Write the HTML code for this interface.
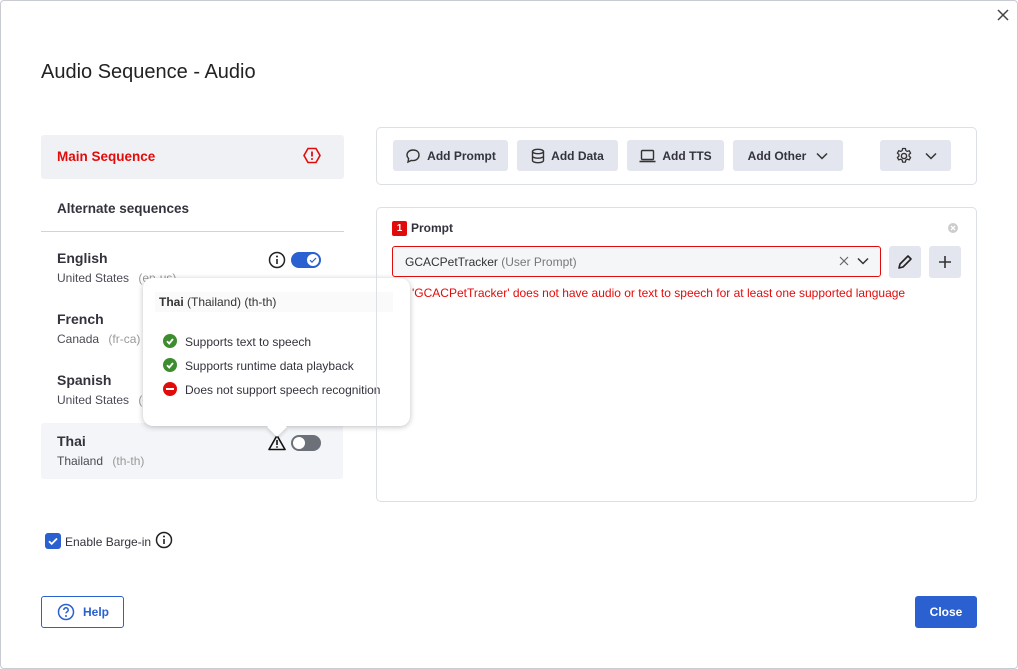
<!DOCTYPE html>
<html><head><meta charset="utf-8"><style>
*{box-sizing:border-box;margin:0;padding:0}
body{width:1018px;height:669px;background:#fff;font-family:"Liberation Sans",sans-serif;color:#33333d;position:relative;overflow:hidden}
.frame{position:absolute;left:0;top:0;width:1018px;height:669px;border:1px solid #c8cbd2;border-radius:4px}
.a{position:absolute}
.b{font-weight:bold}
.btn{position:absolute;top:140px;height:31px;background:#e3e6ee;border-radius:3px;font-size:12px;font-weight:bold;color:#33333d;display:flex;align-items:center;justify-content:center;gap:6px}
.lang{position:absolute;left:57px;font-size:14px;font-weight:bold;color:#33333d}
.sub{position:absolute;left:57px;font-size:12px;color:#4a4a55}
.sub span{color:#999;margin-left:6px}
.tg{position:absolute;width:30px;height:16px;border-radius:8px}
.tg i{position:absolute;top:2px;width:12px;height:12px;border-radius:50%;background:#fff}
</style></head><body>
<div class="frame"></div>
<svg class="a" style="left:997px;top:9px" width="12" height="12"><path d="M1 1l10 10M11 1L1 11" stroke="#444" stroke-width="1.5"/></svg>
<div class="a" style="left:41px;top:61px;font-size:20px;color:#222">Audio Sequence - Audio</div>

<div class="a" style="left:41px;top:135px;width:303px;height:44px;background:#f0f1f5;border-radius:3px"></div>
<div class="a b" style="left:57px;top:149px;font-size:13.5px;color:#e20b0b">Main Sequence</div>
<svg class="a" style="left:303px;top:147px" width="18" height="17" viewBox="0 0 18 17"><path d="M5 1.5H13L17 8.5L13 15.5H5L1 8.5Z" fill="none" stroke="#e20b0b" stroke-width="1.6"/><path d="M9 4.5V9.5" stroke="#e20b0b" stroke-width="1.8"/><circle cx="9" cy="12" r="1" fill="#e20b0b"/></svg>
<div class="a b" style="left:57px;top:201px;font-size:13.5px">Alternate sequences</div>
<div class="a" style="left:41px;top:231px;width:303px;height:1px;background:#d0d3da"></div>

<div class="lang" style="top:250px">English</div>
<div class="sub" style="top:271px">United States <span>(en-us)</span></div>
<svg class="a" style="left:268px;top:251px" width="18" height="18"><circle cx="9" cy="9" r="7.5" fill="none" stroke="#222" stroke-width="1.5"/><rect x="8.2" y="8" width="1.6" height="5" fill="#222"/><circle cx="9" cy="5.5" r="1" fill="#222"/></svg>
<div class="tg" style="left:291px;top:252px;background:#2a60d0"><i style="left:16px"></i></div>
<svg class="a" style="left:307px;top:254px" width="12" height="12"><path d="M3 6.2l2 2L9 4" fill="none" stroke="#2a60d0" stroke-width="1.2"/></svg>
<div class="lang" style="top:311px">French</div>
<div class="sub" style="top:332px">Canada <span>(fr-ca)</span></div>
<div class="lang" style="top:372px">Spanish</div>
<div class="sub" style="top:393px">United States <span>(es-us)</span></div>
<div class="a" style="left:41px;top:423px;width:302px;height:56px;background:#f4f5f8;border-radius:3px"></div>
<div class="lang" style="top:433px">Thai</div>
<div class="sub" style="top:454px">Thailand <span>(th-th)</span></div>
<svg class="a" style="left:268px;top:434px" width="18" height="17"><path d="M9 1.5L17 15.5H1Z" fill="none" stroke="#111" stroke-width="1.6" stroke-linejoin="round"/><rect x="8.2" y="6" width="1.6" height="5" fill="#111"/><circle cx="9" cy="13" r="0.9" fill="#111"/></svg>
<div class="tg" style="left:291px;top:435px;background:#6b7079"><i style="left:2px"></i></div>

<div class="a" style="left:143px;top:278px;width:267px;height:148px;background:#fff;border-radius:10px;box-shadow:0 1px 6px rgba(0,0,0,.25)"></div>
<div class="a" style="left:270px;top:420px;width:14px;height:14px;background:#fff;transform:rotate(45deg);box-shadow:2px 2px 3px rgba(0,0,0,.12)"></div>
<div class="a" style="left:155px;top:292px;width:238px;height:20px;background:#fafafb"></div>
<div class="a" style="left:159px;top:295px;font-size:12px;color:#333"><b>Thai</b> (Thailand) (th-th)</div>
<div class="a" style="left:163px;top:334px;width:14px;height:14px;border-radius:50%;background:#3d8c2f"></div>
<div class="a" style="left:163px;top:358px;width:14px;height:14px;border-radius:50%;background:#3d8c2f"></div>
<svg class="a" style="left:163px;top:334px" width="14" height="38"><path d="M4 7.3L6.2 9.5L10 5" stroke="#fff" stroke-width="1.8" fill="none"/><path d="M4 31.3L6.2 33.5L10 29" stroke="#fff" stroke-width="1.8" fill="none"/></svg>
<div class="a" style="left:163px;top:382px;width:14px;height:14px;border-radius:50%;background:#e20b0b"></div>
<div class="a" style="left:166px;top:388px;width:8px;height:2px;background:#fff"></div>
<div class="a" style="left:185px;top:335px;font-size:12px">Supports text to speech</div>
<div class="a" style="left:185px;top:359px;font-size:12px">Supports runtime data playback</div>
<div class="a" style="left:185px;top:383px;font-size:12px">Does not support speech recognition</div>

<div class="a" style="left:376px;top:127px;width:601px;height:58px;border:1px solid #dcdfe5;border-radius:5px"></div>
<div class="btn" style="left:393px;width:115px"><svg width="16" height="16"><path d="M8 2C4.5 2 2 4.2 2 7c0 1.4.6 2.6 1.6 3.5L3 14l3.4-1.6c.5.1 1 .2 1.6.2 3.5 0 6-2.3 6-5.6S11.5 2 8 2Z" fill="none" stroke="#333" stroke-width="1.4"/></svg>Add Prompt</div>
<div class="btn" style="left:517px;width:101px"><svg width="14" height="16"><ellipse cx="7" cy="3.5" rx="5.5" ry="2.2" fill="none" stroke="#333" stroke-width="1.4"/><path d="M1.5 3.5v9c0 1.2 2.5 2.2 5.5 2.2s5.5-1 5.5-2.2v-9M1.5 8c0 1.2 2.5 2.2 5.5 2.2S12.5 9.2 12.5 8" fill="none" stroke="#333" stroke-width="1.4"/></svg>Add Data</div>
<div class="btn" style="left:627px;width:97px"><svg width="17" height="14"><rect x="2.5" y="1.5" width="12" height="9" rx="1" fill="none" stroke="#333" stroke-width="1.4"/><path d="M0.5 12.5h16" stroke="#333" stroke-width="1.6"/></svg>Add TTS</div>
<div class="btn" style="left:733px;width:110px;gap:10px">Add Other <svg width="12" height="8"><path d="M1 1.5l5 5 5-5" fill="none" stroke="#333" stroke-width="1.5"/></svg></div>
<div class="btn" style="left:880px;width:71px;gap:12px"><svg width="18" height="18" viewBox="0 0 18 18"><circle cx="9" cy="9" r="2.6" fill="none" stroke="#333" stroke-width="1.4"/><path d="M7.6 1.5h2.8l.4 2 1.5.9 1.9-.7 1.4 2.4-1.5 1.3v1.8l1.5 1.3-1.4 2.4-1.9-.7-1.5.9-.4 2H7.6l-.4-2-1.5-.9-1.9.7-1.4-2.4 1.5-1.3V7.4L2.4 6.1l1.4-2.4 1.9.7 1.5-.9Z" fill="none" stroke="#333" stroke-width="1.3" stroke-linejoin="round"/></svg><svg width="12" height="8"><path d="M1 1.5l5 5 5-5" fill="none" stroke="#333" stroke-width="1.5"/></svg></div>

<div class="a" style="left:376px;top:207px;width:601px;height:295px;border:1px solid #dcdfe5;border-radius:5px"></div>
<div class="a b" style="left:392px;top:221px;width:15px;height:15px;background:#e20b0b;color:#fff;font-size:10px;text-align:center;line-height:15px;border-radius:2px">1</div>
<div class="a b" style="left:411px;top:221px;font-size:12px">Prompt</div>
<svg class="a" style="left:947px;top:222px" width="12" height="12"><circle cx="6" cy="6" r="5" fill="#ccc"/><path d="M4 4l4 4M8 4l-4 4" stroke="#fff" stroke-width="1.3"/></svg>
<div class="a" style="left:392px;top:246px;width:489px;height:31px;border:1px solid #e20b0b;border-radius:3px;background:#f5f6f8"></div>
<div class="a" style="left:405px;top:255px;font-size:12px;color:#333">GCACPetTracker <span style="color:#777">(User Prompt)</span></div>
<svg class="a" style="left:839px;top:256px" width="10" height="10"><path d="M1 1l8 8M9 1L1 9" stroke="#666" stroke-width="1.2"/></svg>
<svg class="a" style="left:857px;top:257px" width="12" height="8"><path d="M1 1.5l5 5 5-5" fill="none" stroke="#333" stroke-width="1.5"/></svg>
<div class="a" style="left:889px;top:246px;width:32px;height:32px;background:#e3e6ee;border-radius:3px"></div>
<svg class="a" style="left:897px;top:254px" width="16" height="16"><path d="M2 14l1-4 8-8 3 3-8 8Z" fill="none" stroke="#222" stroke-width="1.6" stroke-linejoin="round"/></svg>
<div class="a" style="left:929px;top:246px;width:32px;height:32px;background:#e3e6ee;border-radius:3px"></div>
<svg class="a" style="left:937px;top:254px" width="16" height="16"><path d="M8 2v12M2 8h12" stroke="#333" stroke-width="1.6"/></svg>
<div class="a" style="left:412px;top:286px;font-size:12px;color:#e20b0b">'GCACPetTracker' does not have audio or text to speech for at least one supported language</div>

<div class="a" style="left:45px;top:533px;width:16px;height:16px;background:#2a60d0;border-radius:3px"></div>
<svg class="a" style="left:45px;top:533px" width="16" height="16"><path d="M4 8.2l2.7 2.7L12 5.5" fill="none" stroke="#fff" stroke-width="1.8"/></svg>
<div class="a" style="left:65px;top:535px;font-size:12px">Enable Barge-in</div>
<svg class="a" style="left:155px;top:531px" width="18" height="18"><circle cx="9" cy="9" r="7.5" fill="none" stroke="#222" stroke-width="1.5"/><rect x="8.2" y="8" width="1.6" height="5" fill="#222"/><circle cx="9" cy="5.5" r="1" fill="#222"/></svg>

<div class="a" style="left:41px;top:596px;width:83px;height:32px;border:1px solid #2a60d0;border-radius:3px"></div>
<svg class="a" style="left:57px;top:603px" width="18" height="18"><circle cx="9" cy="9" r="7.5" fill="none" stroke="#2a60d0" stroke-width="1.5"/><path d="M6.8 7a2.2 2.2 0 1 1 3 2c-.6.3-.8.7-.8 1.4" fill="none" stroke="#2a60d0" stroke-width="1.5"/><circle cx="9" cy="13" r="1" fill="#2a60d0"/></svg>
<div class="a b" style="left:83px;top:605px;font-size:12px;color:#2a60d0">Help</div>
<div class="a b" style="left:915px;top:596px;width:62px;height:32px;background:#2a60d0;border-radius:3px;color:#fff;font-size:12px;text-align:center;line-height:32px">Close</div>
</body></html>
